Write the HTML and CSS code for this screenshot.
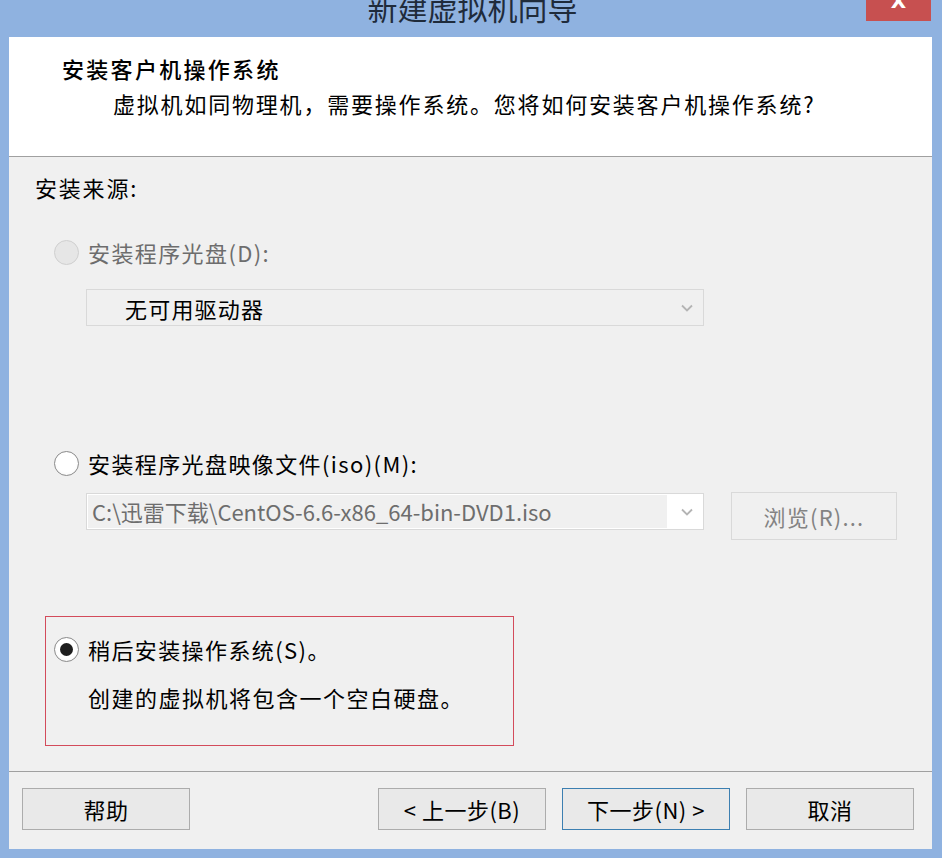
FILE: index.html
```html
<!DOCTYPE html>
<html lang="zh-CN">
<head>
<meta charset="utf-8">
<title>新建虚拟机向导</title>
<link rel="stylesheet" href="styles.css">
</head>
<body>
<div class="window">
  <div class="titlebar">
    <div class="title">新建虚拟机向导</div>
    <div class="close"><span>X</span></div>
  </div>
  <div class="client">
    <div class="header">
      <div class="h-title">安装客户机操作系统</div>
      <div class="h-sub">虚拟机如同物理机，需要操作系统。您将如何安装客户机操作系统?</div>
    </div>
    <div class="content">
      <div class="src-label">安装来源:</div>

      <div class="opt opt-1 disabled">
        <span class="radio"></span>
        <span class="opt-text">安装程序光盘(D):</span>
      </div>
      <div class="combo combo-1">
        <span class="combo-text">无可用驱动器</span>
        <span class="arrow"><svg width="12" height="8" viewBox="0 0 12 8"><path d="M1 1.5 L6 6.5 L11 1.5" fill="none" stroke="#b4b4b4" stroke-width="1.8"/></svg></span>
      </div>

      <div class="opt opt-2">
        <span class="radio"></span>
        <span class="opt-text">安装程序光盘映像文件(iso)(M):</span>
      </div>
      <div class="file-row">
        <div class="combo combo-2">
          <span class="combo-text gray">C:\迅雷下载\CentOS-6.6-x86_64-bin-DVD1.iso</span>
          <span class="arrow white"><svg width="12" height="8" viewBox="0 0 12 8"><path d="M1 1.5 L6 6.5 L11 1.5" fill="none" stroke="#b4b4b4" stroke-width="1.8"/></svg></span>
        </div>
        <div class="btn browse">浏览(R)...</div>
      </div>

      <div class="later-box">
        <div class="opt opt-3">
          <span class="radio checked"></span>
          <span class="opt-text">稍后安装操作系统(S)。</span>
        </div>
        <div class="later-desc">创建的虚拟机将包含一个空白硬盘。</div>
      </div>
    </div>
    <div class="footer">
      <div class="btn">帮助</div>
      <div class="spacer"></div>
      <div class="btn">&lt; 上一步(B)</div>
      <div class="btn primary">下一步(N) &gt;</div>
      <div class="btn">取消</div>
    </div>
  </div>
</div>
</body>
</html>
```

FILE: styles.css
```css
* { box-sizing: border-box; }
html, body {
  margin: 0;
  padding: 0;
  width: 942px;
  height: 858px;
  overflow: hidden;
  background: #8fb2e0;
  font-family: "Noto Sans CJK SC", "Microsoft YaHei", sans-serif;
  font-size: 22px;
  color: #000;
}
.window {
  width: 942px;
  height: 858px;
  padding: 0 10px 0 9px;
}
.titlebar {
  height: 37px;
  position: relative;
  overflow: hidden;
}
.title {
  text-align: center;
  font-size: 30px;
  line-height: 30px;
  margin-top: -8px;
  color: #1f2b3b;
  padding-left: 4px;
}
.close {
  position: absolute;
  right: 1px;
  top: 0;
  width: 65px;
  height: 21px;
  background: #c75050;
  overflow: hidden;
  text-align: center;
}
.close span {
  display: block;
  color: #fff;
  font-family: "DejaVu Sans", sans-serif;
  font-size: 20px;
  font-weight: bold;
  line-height: 20px;
  margin-top: -9px;
}
.client {
  width: 923px;
  height: 812px;
  background: #f0f0f0;
  display: flex;
  flex-direction: column;
}
.header {
  background: #fff;
  height: 120px;
  border-bottom: 1px solid #a0a0a0;
  padding: 16px 0 0 53px;
}
.h-title {
  font-size: 22px;
  line-height: 30px;
  font-weight: 500;
  letter-spacing: 2.3px;
}
.h-sub {
  font-size: 22px;
  line-height: 30px;
  margin: 5px 0 0 51px;
  letter-spacing: 1.8px;
}
.content {
  height: 615px;
  padding: 15px 0 0 26px;
  border-bottom: 1px solid #a0a0a0;
}
.src-label {
  line-height: 30px;
  letter-spacing: 1.8px;
}
.opt {
  display: flex;
  align-items: center;
  height: 30px;
  margin-left: 19px;
}
.opt-text {
  margin-left: 9px;
  letter-spacing: 1.4px;
}
.opt-1 { margin-top: 35px; }
.opt-2 { margin-top: 122px; }
.disabled .opt-text { color: #6d6d6d; }
.radio {
  width: 25px;
  height: 25px;
  border-radius: 50%;
  border: 1px solid #8b8b8b;
  background: radial-gradient(circle at 50% 45%, #ffffff 55%, #f1f1f1 100%);
  display: inline-flex;
  align-items: center;
  justify-content: center;
  flex: none;
}
.disabled .radio {
  border-color: #cfcfcf;
  background: #e6e6e6;
}
.radio.checked::after {
  content: "";
  width: 13px;
  height: 13px;
  border-radius: 50%;
  background: #1e1e1e;
}
.combo {
  display: flex;
  align-items: center;
  width: 618px;
  height: 37px;
  border: 1px solid #d9d9d9;
  background: #f0f0f0;
}
.combo-1 {
  margin: 22px 0 0 51px;
}
.combo-text {
  flex: 1;
  padding-left: 38px;
  line-height: 30px;
  letter-spacing: 1.2px;
}
.combo-text.gray {
  color: #6d6d6d;
  padding-left: 4px;
  letter-spacing: 0;
  background: #f0f0f0;
  height: 33px;
  line-height: 33px;
  margin: 1px 0 1px 1px;
}
.arrow {
  width: 36px;
  height: 35px;
  display: flex;
  align-items: center;
  justify-content: center;
  padding-left: 4px;
}
.arrow.white { background: #fff; }
.file-row {
  display: flex;
  align-items: flex-start;
  margin: 14px 0 0 51px;
  gap: 27px;
}
.file-row .combo { margin-top: 1px; background: #fff; }
.btn {
  width: 168px;
  height: 42px;
  border: 1px solid #acacac;
  background: #e9e9e9;
  display: flex;
  align-items: center;
  justify-content: center;
  line-height: 30px;
  letter-spacing: 0.5px;
}
.browse {
  width: 166px;
  height: 48px;
  border-color: #d9d9d9;
  background: #f0f0f0;
  color: #838383;
  letter-spacing: 1.2px;
}
.later-box {
  width: 469px;
  height: 130px;
  margin: 76px 0 0 10px;
  border: 1px solid #d34b5b;
  padding-top: 17px;
}
.later-box .opt { margin-left: 8px; }
.later-desc {
  margin: 18px 0 0 42px;
  line-height: 30px;
  letter-spacing: 1.5px;
}
.footer {
  display: flex;
  padding: 16px 18px 0 13px;
  gap: 16px;
  height: 76px;
}
.footer .spacer { flex: 1; }
.btn.primary { border-color: #3c7fb1; }
```
